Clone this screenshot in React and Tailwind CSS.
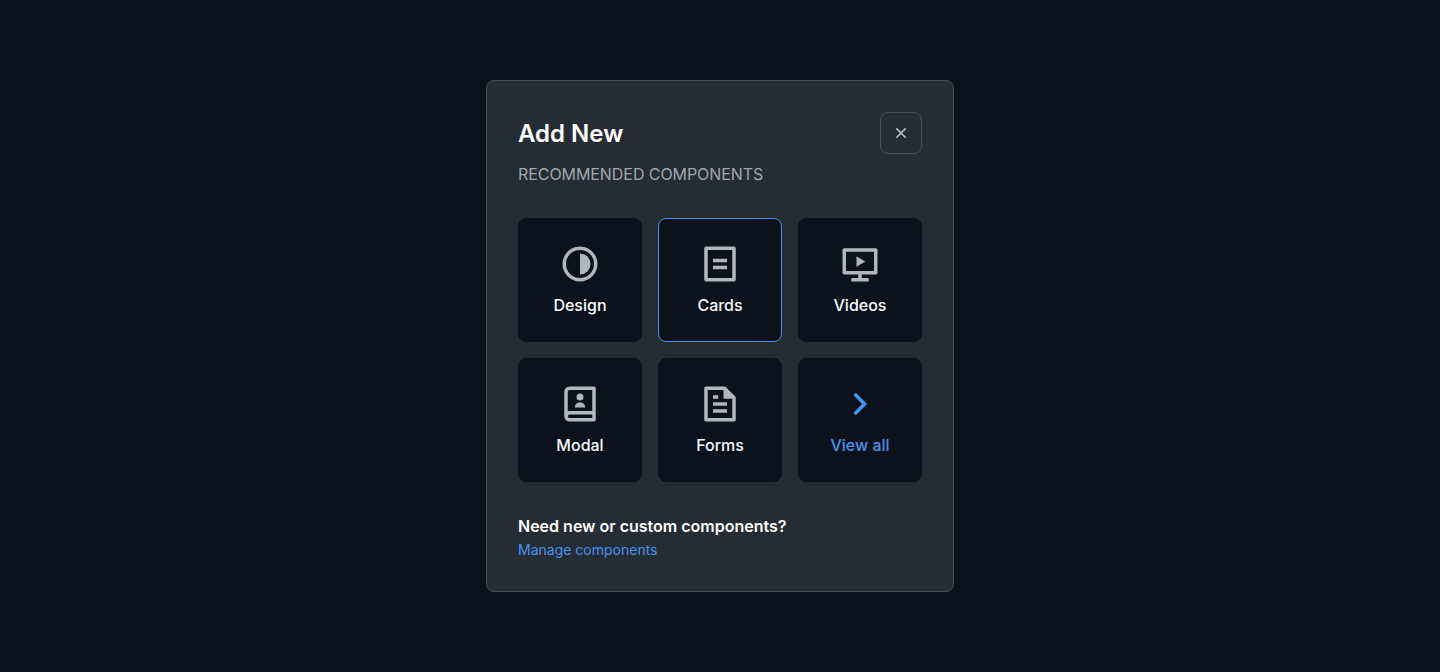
import React from "react";

const ICONS = {
  close:
    "M12 10.586l4.95-4.95 1.414 1.414-4.95 4.95 4.95 4.95-1.414 1.414-4.95-4.95-4.95 4.95-1.414-1.414 4.95-4.95-4.95-4.95L7.05 5.636z",
  design:
    "M12 22C6.477 22 2 17.523 2 12S6.477 2 12 2s10 4.477 10 10-4.477 10-10 10zm0-2a8 8 0 1 0 0-16 8 8 0 0 0 0 16zm0-2V6a6 6 0 1 1 0 12z",
  cards:
    "M20 22H4a1 1 0 0 1-1-1V3a1 1 0 0 1 1-1h16a1 1 0 0 1 1 1v18a1 1 0 0 1-1 1zm-1-2V4H5v16h14zM8 9h8v2H8V9zm0 4h8v2H8v-2z",
  videos:
    "M13 18v2h4v2H7v-2h4v-2H2.992A.998.998 0 0 1 2 16.993V4.007C2 3.451 2.455 3 2.992 3h18.016c.548 0 .992.449.992 1.007v12.986c0 .556-.455 1.007-.992 1.007H13zM4 5v11h16V5H4zm6 2.5l5 3-5 3v-6z",
  modal:
    "M20 22H6a3 3 0 0 1-3-3V5a3 3 0 0 1 3-3h14a1 1 0 0 1 1 1v18a1 1 0 0 1-1 1zm-1-2v-2H6a1 1 0 0 0 0 2h13zM5 16.17c.313-.11.65-.17 1-.17h13V4H6a1 1 0 0 0-1 1v11.17zM12 10a2 2 0 1 1 0-4 2 2 0 0 1 0 4zm-3 4a3 3 0 0 1 6 0H9z",
  forms:
    "M21 8v12.993A1 1 0 0 1 20.007 22H3.993A.993.993 0 0 1 3 21.008V2.992C3 2.455 3.449 2 4.002 2h10.995L21 8zm-2 1h-5V4H5v16h14V9zM8 7h3v2H8V7zm0 4h8v2H8v-2zm0 4h8v2H8v-2z",
  arrow: "M13.172 12l-4.95-4.95 1.414-1.414L16 12l-6.364 6.364-1.414-1.414z",
};

const TILES = [
  { label: "Design", icon: "design" },
  { label: "Cards", icon: "cards", selected: true },
  { label: "Videos", icon: "videos" },
  { label: "Modal", icon: "modal" },
  { label: "Forms", icon: "forms" },
  { label: "View all", icon: "arrow", link: true },
];

function Icon({ name, className }) {
  return (
    <svg viewBox="0 0 24 24" fill="currentColor" className={className} aria-hidden="true">
      <path d={ICONS[name]} />
    </svg>
  );
}

function Tile({ label, icon, selected, link }) {
  return (
    <button
      type="button"
      className={`flex h-[124px] flex-col items-center rounded-lg border bg-[#0c121b] pt-6 ${
        selected ? "border-[#4394f0]" : "border-[#0c121b]"
      }`}
    >
      <Icon name={icon} className={`size-[42px] ${link ? "text-[#4394f0]" : "text-[#b1b5bc]"}`} />
      <span
        className={`mt-2 text-base leading-6 font-medium ${
          link ? "text-[#4394f0]" : "text-[#f9fafb]"
        }`}
      >
        {label}
      </span>
    </button>
  );
}

export default function App() {
  return (
    <main className="flex min-h-screen items-center justify-center bg-[#0c121b] font-['Inter',sans-serif]">
      <section className="h-[512px] w-[468px] rounded-lg border border-[#495057] bg-[#262c33] p-[31px]">
        <header className="flex h-[42px] items-center justify-between">
          <h1 className="pt-0.5 text-2xl leading-8 font-semibold text-white">Add New</h1>
          <button
            type="button"
            aria-label="Close"
            className="flex size-[42px] items-center justify-center rounded-lg border border-[#495057] text-[#b1b5bc]"
          >
            <Icon name="close" className="size-5" />
          </button>
        </header>
        <p className="mt-2 text-base leading-6 tracking-[-0.07px] text-[#a2a6ae]">RECOMMENDED COMPONENTS</p>
        <div className="mt-8 grid grid-cols-3 gap-4">
          {TILES.map((tile) => (
            <Tile key={tile.label} {...tile} />
          ))}
        </div>
        <footer className="mt-8">
          <p className="text-base leading-6 font-semibold text-white">Need new or custom components?</p>
          <a href="#" className="block text-sm leading-6 text-[#4394f0]">
            Manage components
          </a>
        </footer>
      </section>
    </main>
  );
}
